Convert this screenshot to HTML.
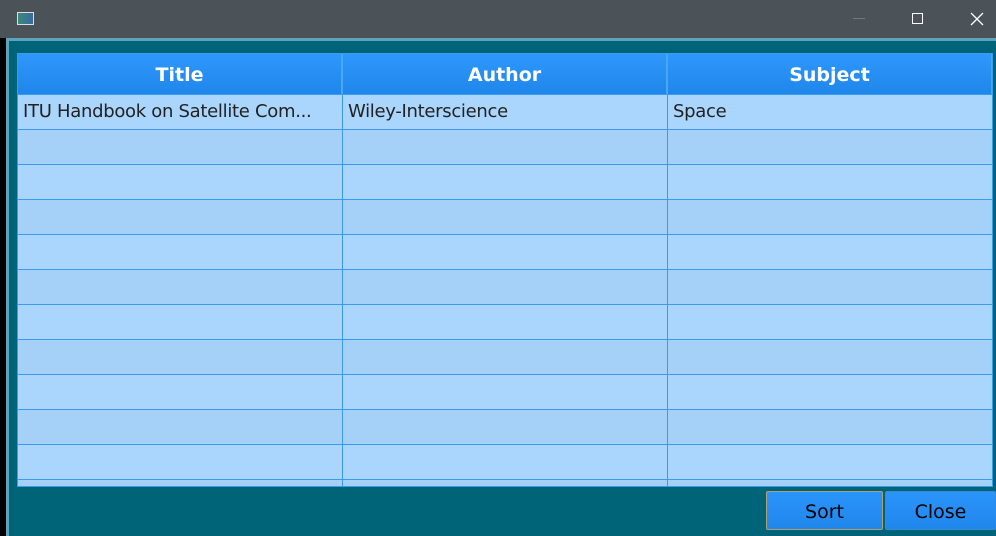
<html><head><style>
body{margin:0;width:996px;height:536px;overflow:hidden;background:#000;font-family:"DejaVu Sans","Liberation Sans",sans-serif;position:relative}
.tb{position:absolute;left:0;top:0;width:996px;height:38px;background:#4b5258}
.fr{position:absolute;left:6px;top:38px;width:990px;height:498px;background:#006478;border-top:3px solid #5ea3bb;border-left:3px solid #5ea3bb;box-sizing:border-box}
.tbl{position:absolute;left:17px;top:53px;width:976px;height:434px;overflow:hidden;background:#aad5fd;border:1px solid #3a9af0;box-sizing:border-box}
.h{position:absolute;top:0;height:40px;background:linear-gradient(#2f98fb,#1f86ec);color:#fff;font-weight:bold;font-size:19px;text-align:center;line-height:42px;border-right:2px solid #4aa6f8;box-sizing:border-box}
.r{position:absolute;left:0;width:976px;height:35px;border-top:1px solid #3a9af0;box-sizing:border-box}
.v{position:absolute;top:40px;width:1px;height:400px;background:#3a9af0}
.c{position:absolute;font-size:18px;letter-spacing:-0.3px;color:#222;line-height:34px}
.b{position:absolute;top:491px;height:39px;background:linear-gradient(#2b94fa,#1f86ec);font-size:19px;text-align:center;line-height:41px;color:#000;box-sizing:border-box;border-radius:2px}
</style></head><body>
<div class="tb">
<div style="position:absolute;left:17px;top:12px;width:17px;height:13px;background:linear-gradient(90deg,#3a8a7a,#3a6aa0);border:1px solid #ddd;box-sizing:border-box"></div>
<div style="position:absolute;left:853px;top:18px;width:12px;height:1px;background:#777"></div>
<div style="position:absolute;left:912px;top:13px;width:11px;height:11px;border:1px solid #fff;box-sizing:border-box"></div>
<svg style="position:absolute;left:970px;top:12px" width="14" height="14"><path d="M1 1L13 13M13 1L1 13" stroke="#fff" stroke-width="1.3"/></svg>
</div>
<div class="fr"></div>
<div class="tbl">
<div class="h" style="left:0;width:325px">Title</div>
<div class="h" style="left:325px;width:325px">Author</div>
<div class="h" style="left:650px;width:325px">Subject</div>
<div class="r" style="top:40px;background:#aad5fd"></div>
<div class="r" style="top:75px;background:#a5d0f7"></div>
<div class="r" style="top:110px;background:#aad5fd"></div>
<div class="r" style="top:145px;background:#a5d0f7"></div>
<div class="r" style="top:180px;background:#aad5fd"></div>
<div class="r" style="top:215px;background:#a5d0f7"></div>
<div class="r" style="top:250px;background:#aad5fd"></div>
<div class="r" style="top:285px;background:#a5d0f7"></div>
<div class="r" style="top:320px;background:#aad5fd"></div>
<div class="r" style="top:355px;background:#a5d0f7"></div>
<div class="r" style="top:390px;background:#aad5fd"></div>
<div class="r" style="top:425px;background:#a5d0f7"></div>
<div class="v" style="left:324px"></div><div class="v" style="left:649px"></div>
<div class="c" style="left:5px;top:41px">ITU Handbook on Satellite Com...</div>
<div class="c" style="left:330px;top:41px">Wiley-Interscience</div>
<div class="c" style="left:655px;top:41px">Space</div>
</div>
<div class="b" style="left:766px;width:117px;border:1px solid #b0a070">Sort</div>
<div class="b" style="left:885px;width:111px;border:1px solid #3a8ad0">Close</div>
</body></html>
